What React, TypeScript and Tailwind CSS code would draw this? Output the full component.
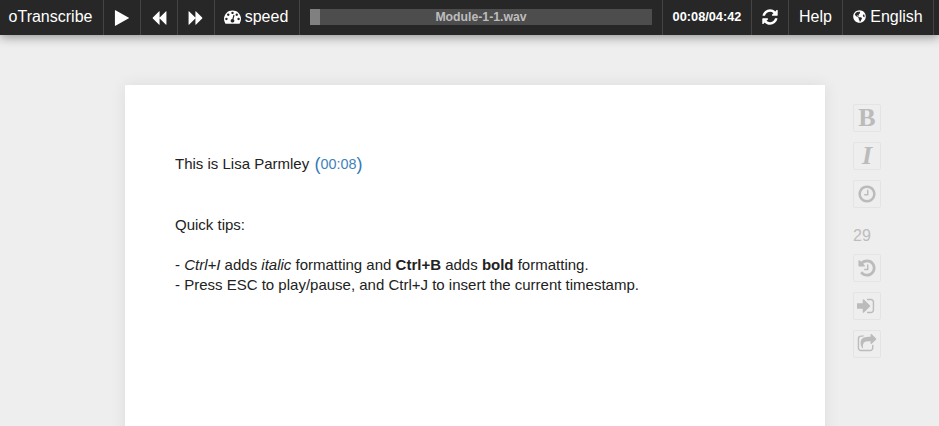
import { FaGlobeAmericas } from "react-icons/fa";

const P = {
  play: "M1576 927l-1328 738q-23 13-39.500 3t-16.500-36v-1472q0-26 16.500-36t39.500 3l1328 738q23 13 23 31t-23 31z",
  back: "M1683 141q19-19 32-13t13 32v1472q0 26-13 32t-32-13l-710-710q-9-9-13-19v710q0 26-13 32t-32-13l-710-710q-19-19-19-45t19-45l710-710q19-19 32-13t13 32v710q4-10 13-19z",
  fwd: "M109 1651q-19 19-32 13t-13-32v-1472q0-26 13-32t32 13l710 710q9 9 13 19v-710q0-26 13-32t32 13l710 710q19 19 19 45t-19 45l-710 710q-19 19-32 13t-13-32v-710q-4 10-13 19z",
  dash: "M384 1152q0-53-37.500-90.500t-90.500-37.500-90.500 37.500-37.500 90.500 37.500 90.500 90.500 37.500 90.500-37.500 37.500-90.500zm192-448q0-53-37.500-90.500t-90.500-37.500-90.500 37.500-37.500 90.500 37.500 90.500 90.500 37.500 90.500-37.500 37.500-90.500zm428 481l101-382q6-26-7.500-48.500t-38.500-29.500-48 6.500-30 39.500l-101 382q-60 5-107 43.500t-63 98.500q-20 77 20 146t117 89 146-20 89-117q16-60-6-117t-72-91zm660-33q0-53-37.500-90.500t-90.500-37.500-90.500 37.500-37.500 90.500 37.500 90.500 90.500 37.500 90.500-37.500 37.500-90.500zm-640-640q0-53-37.500-90.500t-90.500-37.500-90.500 37.500-37.500 90.500 37.500 90.500 90.500 37.500 90.500-37.500 37.500-90.500zm448 192q0-53-37.500-90.500t-90.500-37.500-90.500 37.500-37.500 90.500 37.500 90.500 90.500 37.500 90.500-37.500 37.500-90.500zm320 448q0 261-141 483-19 29-54 29h-1402q-35 0-54-29-141-221-141-483 0-182 71-348t191-286 286-191 348-71 348 71 286 191 191 286 71 348z",
  refresh: "M1639 1056q0 5-1 7-64 268-268 434.500t-478 166.500q-146 0-282.500-55t-243.500-157l-129 129q-19 19-45 19t-45-19-19-45v-448q0-26 19-45t45-19h448q26 0 45 19t19 45-19 45l-137 137q71 66 161 102t187 36q134 0 250-65t186-179q11-17 53-117 8-23 30-23h192q13 0 22.500 9.500t9.500 22.500zm25-800v448q0 26-19 45t-45 19h-448q-26 0-45-19t-19-45 19-45l138-138q-148-137-349-137-134 0-250 65t-186 179q-11 17-53 117-8 23-30 23h-199q-13 0-22.500-9.500t-9.500-22.500v-7q65-268 270-434.500t480-166.500q146 0 284 55.500t245 156.500l130-129q19-19 45-19t45 19 19 45z",
  clock: "M1024 544v448q0 14-9 23t-23 9h-320q-14 0-23-9t-9-23v-64q0-14 9-23t23-9h224v-352q0-14 9-23t23-9h64q14 0 23 9t9 23zm416 352q0-148-73-273t-198-198-273-73-273 73-198 198-73 273 73 273 198 198 273 73 273-73 198-198 73-273zm224 0q0 209-103 385.500t-279.500 279.500-385.500 103-385.500-103-279.500-279.500-103-385.500 103-385.500 279.500-279.500 385.500-103 385.500 103 279.500 279.500 103 385.500z",
  history: "M1664 896q0 156-61 298t-164 245-245 164-298 61q-172 0-327-72.500t-264-204.500q-7-10-6.500-22.500t8.500-20.500l137-138q10-9 25-9 16 2 23 12 73 95 179 147t225 52q104 0 198.500-40.500t163.500-109.500 109.500-163.500 40.500-198.500-40.500-198.500-109.500-163.500-163.500-109.500-198.500-40.500q-98 0-188 35.500t-160 101.500l137 138q31 30 14 69-17 40-59 40h-448q-26 0-45-19t-19-45v-448q0-42 40-59 39-17 69 14l130 129q107-101 244.500-156.500t284.500-55.500q156 0 298 61t245 164 164 245 61 298zm-640-288v448q0 14-9 23t-23 9h-320q-14 0-23-9t-9-23v-64q0-14 9-23t23-9h224v-352q0-14 9-23t23-9h64q14 0 23 9t9 23z",
  signIn: "M1184 896q0 26-19 45l-544 544q-19 19-45 19t-45-19-19-45v-288h-448q-26 0-45-19t-19-45v-384q0-26 19-45t45-19h448v-288q0-26 19-45t45-19 45 19l544 544q19 19 19 45zm352-352v704q0 119-84.500 203.500t-203.500 84.500h-320q-13 0-22.500-9.500t-9.500-22.500q0-4-1-20t-.5-26.500 3-23.500 10-19.500 20.500-6.500h320q66 0 113-47t47-113v-704q0-66-47-113t-113-47h-312l-11.500-1-11.500-3-8-5.500-7-9-2-13.500q0-4-1-20t-.5-26.500 3-23.500 10-19.500 20.500-6.500h320q119 0 203.500 84.500t84.500 203.500z",
  share: "M1472 989v259q0 119-84.500 203.500t-203.500 84.500h-832q-119 0-203.500-84.500t-84.500-203.500v-832q0-119 84.500-203.500t203.500-84.500h255q13 0 22.500 9.500t9.500 22.500q0 27-26 32-77 26-133 60-10 4-16 4h-112q-66 0-113 47t-47 113v832q0 66 47 113t113 47h832q66 0 113-47t47-113v-214q0-19 18-29 28-13 54-37 16-16 35-8 21 9 21 29zm237-496l-384 384q-18 19-45 19-12 0-25-5-39-17-39-59v-192h-160q-323 0-438 131-119 137-74 473 3 23-20 34-8 2-12 2-16 0-26-13-10-14-21-31t-39.500-68.500-49.500-99.500-38.500-114-17.500-122q0-49 3.500-91t14-90 28-88 47-81.500 68.500-74 94.500-61.500 124.500-48.500 159.500-30.500 196.500-11h160v-192q0-42 39-59 13-5 25-5 26 0 45 19l384 384q19 19 19 45t-19 45z",
};

function Fa({ d, size }: { d: string; size: number }) {
  return (
    <svg viewBox="0 0 1792 1792" width={size} height={size} fill="currentColor" className="shrink-0">
      <path d={d} />
    </svg>
  );
}

function SideButton({ children }: { children: React.ReactNode }) {
  return (
    <div className="flex h-[28px] w-[28px] items-center justify-center rounded-[2px] border border-[#e4e4e4] text-[#bbbbbb]">
      {children}
    </div>
  );
}

export default function App() {
  return (
    <div className="flex h-[426px] w-[939px] flex-col overflow-hidden bg-[#eeeeee] font-['Liberation_Sans',Arial,sans-serif]">
      <nav className="z-10 flex h-[35px] shrink-0 items-stretch bg-[#272727] text-[16px] text-white shadow-[0_2px_10px_rgba(0,0,0,0.4)]">
        <div className="flex w-[104px] items-center justify-center border-r border-[#444444] pb-[2px] pr-[2px]">oTranscribe</div>
        <div className="flex w-[37px] items-center justify-center border-r border-[#444444]"><Fa d={P.play} size={18} /></div>
        <div className="flex w-[37px] items-center justify-center border-r border-[#444444]"><Fa d={P.back} size={16} /></div>
        <div className="flex w-[37px] items-center justify-center border-r border-[#444444]"><Fa d={P.fwd} size={16} /></div>
        <div className="flex w-[85px] items-center justify-center gap-[4px] border-r border-[#444444] pb-[2px] pr-[2px]"><Fa d={P.dash} size={17} />speed</div>
        <div className="flex w-[363px] items-start border-r border-[#444444] pl-[10px] pr-[10px] pt-[9px]">
          <div className="relative flex h-[16px] w-[342px] items-center justify-center bg-[#4d4d4d] text-[12.25px] font-bold text-[#bdbdbd]">
            <div className="absolute left-0 top-0 h-full w-[10px] bg-[#808080]" />
            Module-1-1.wav
          </div>
        </div>
        <div className="flex w-[89px] items-center justify-center border-r border-[#444444] pb-[2px] text-[12.75px] font-bold">00:08/04:42</div>
        <div className="flex w-[37px] items-center justify-center border-r border-[#444444] pb-[1px]"><Fa d={P.refresh} size={18} /></div>
        <div className="flex w-[54px] items-center justify-center border-r border-[#444444] pb-[2px]">Help</div>
        <div className="flex w-[91px] items-center justify-center gap-[4px] border-r border-[#444444] pb-[2px]"><FaGlobeAmericas className="h-[13px] w-[13px]" />English</div>
      </nav>
      <main className="flex flex-1 items-start pl-[125px] pt-[50px]">
        <div className="h-[400px] w-[700px] shrink-0 bg-white px-[50px] pt-[69px] text-[15px] leading-[20px] text-[#222222] shadow-[0_0_15px_rgba(0,0,0,0.08)]">
          <div className="flex items-center whitespace-pre">This is Lisa Parmley <span className="ml-[1px] flex items-center text-[14.4px] text-[#3f83bb]"><span className="text-[18px] text-[#337ab7]">(</span>00:08<span className="text-[18px] text-[#337ab7]">)</span></span></div>
          <div className="mt-[41px]">Quick tips:</div>
          <div className="mt-[20px]">- <i>Ctrl+I</i> adds <i>italic</i> formatting and <b>Ctrl+B</b> adds <b>bold</b> formatting.</div>
          <div>- Press ESC to play/pause, and Ctrl+J to insert the current timestamp.</div>
        </div>
        <div className="ml-[28px] mt-[19px] flex flex-col items-center">
          <div className="flex flex-col gap-[10px]">
            <SideButton><span className="text-[26px] font-bold leading-none" style={{ fontFamily: '"Liberation Serif", serif' }}>B</span></SideButton>
            <SideButton><span className="text-[26px] font-bold italic leading-none" style={{ fontFamily: '"Liberation Serif", serif' }}>I</span></SideButton>
            <SideButton><Fa d={P.clock} size={20} /></SideButton>
          </div>
          <div className="mb-[8px] mt-[18px] w-full text-[16px] leading-[20px] text-[#bdbdbd]">29</div>
          <div className="flex flex-col gap-[10px]">
            <SideButton><Fa d={P.history} size={20} /></SideButton>
            <SideButton><Fa d={P.signIn} size={20} /></SideButton>
            <SideButton><Fa d={P.share} size={20} /></SideButton>
          </div>
        </div>
      </main>
    </div>
  );
}
